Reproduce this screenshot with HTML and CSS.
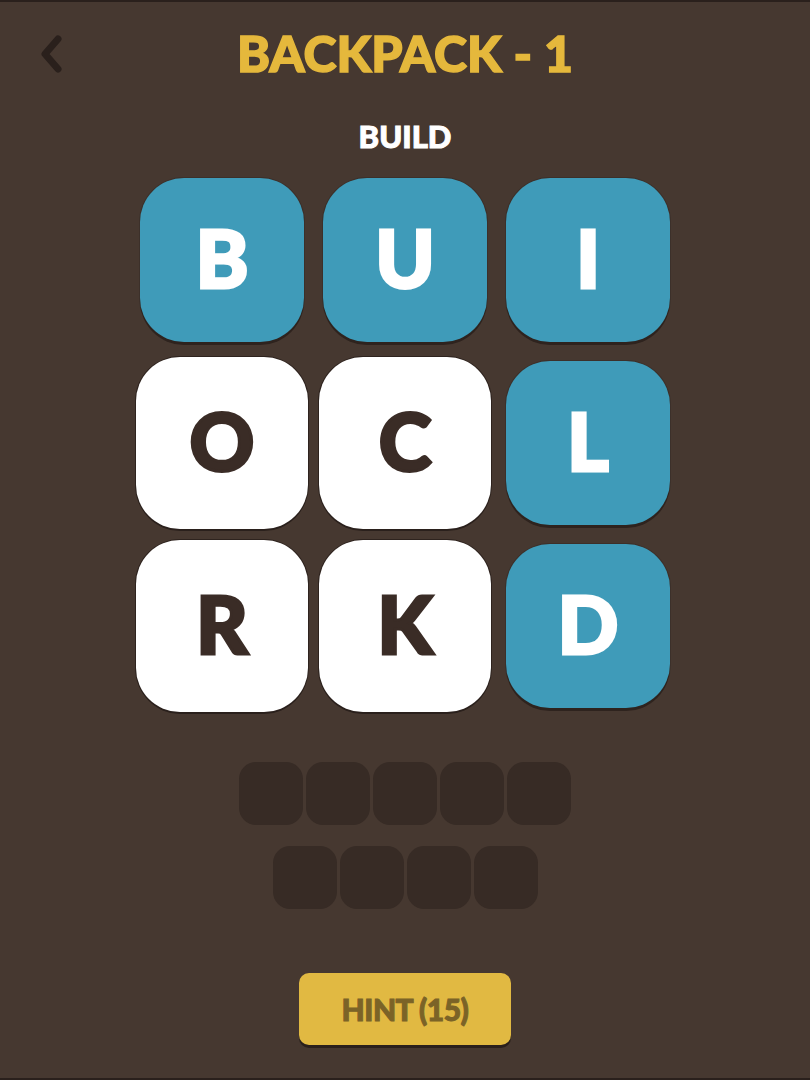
FILE: index.html
```html
<!DOCTYPE html>
<html>
<head>
<meta charset="utf-8">
<link rel="stylesheet" href="styles.css">
</head>
<body>
<div class="screen">
  <header class="header">
    <svg class="back" width="30" height="40" viewBox="0 0 30 40"><path d="M21 5 L8 20 L21 35" fill="none" stroke="#2a201c" stroke-width="7" stroke-linecap="round" stroke-linejoin="round"/></svg>
    <h1 class="title">BACKPACK - 1</h1>
  </header>
  <div class="word">BUILD</div>
  <div class="grid">
    <div class="cell"><div class="tile blue">B</div></div>
    <div class="cell"><div class="tile blue">U</div></div>
    <div class="cell"><div class="tile blue">I</div></div>
    <div class="cell"><div class="tile white">O</div></div>
    <div class="cell"><div class="tile white">C</div></div>
    <div class="cell"><div class="tile blue">L</div></div>
    <div class="cell"><div class="tile white">R</div></div>
    <div class="cell"><div class="tile white">K</div></div>
    <div class="cell"><div class="tile blue">D</div></div>
  </div>
  <div class="slots">
    <div class="slot-row">
      <div class="slot"></div><div class="slot"></div><div class="slot"></div><div class="slot"></div><div class="slot"></div>
    </div>
    <div class="slot-row">
      <div class="slot"></div><div class="slot"></div><div class="slot"></div><div class="slot"></div>
    </div>
  </div>
  <div class="hint-wrap"><button class="hint">HINT (15)</button></div>
</div>
</body>
</html>
```
FILE: styles.css
```css
html, body {
  margin: 0;
  padding: 0;
}
body {
  background: #463830;
  font-family: Lato, "Open Sans", sans-serif;
}
.screen {
  height: 1076px;
  border-top: 2px solid #2a201c;
  border-bottom: 2px solid #2a201c;
  display: flex;
  flex-direction: column;
  align-items: center;
}
.header {
  position: relative;
  width: 100%;
  height: 100px;
  display: flex;
  justify-content: center;
  align-items: flex-start;
}
.back {
  position: absolute;
  left: 37px;
  top: 32px;
}
.title {
  margin: 24px 0 0;
  font-size: 50px;
  font-weight: 900;
  color: #e5b83c;
  line-height: 54px;
  letter-spacing: 0;
  -webkit-text-stroke: 1.5px #e5b83c;
}
.word {
  margin-top: 14px;
  font-size: 31px;
  font-weight: 900;
  color: #ffffff;
  line-height: 40px;
  -webkit-text-stroke: 1px #ffffff;
}
.grid {
  margin-top: 18px;
  display: grid;
  grid-template-columns: repeat(3, 172px);
  grid-template-rows: repeat(3, 172px);
  gap: 11px;
}
.cell {
  display: flex;
}
.tile {
  flex: 1;
  border-radius: 44px;
  display: flex;
  align-items: center;
  justify-content: center;
  font-size: 80px;
  font-weight: 900;
  line-height: 1;
  padding-bottom: 6px;
}
.tile.blue {
  margin: 4px;
  background: #3f9bb9;
  color: #ffffff;
  -webkit-text-stroke: 3px #ffffff;
  box-shadow: 0 3px 0 #2e231e, 0 0 0 1px #3c302a;
}
.tile.white {
  background: #ffffff;
  color: #3a2c26;
  -webkit-text-stroke: 3px #3a2c26;
  box-shadow: 0 2px 0 #2a201c, 0 0 0 1px #2e231e;
}
.slots {
  margin-top: 50px;
  display: flex;
  flex-direction: column;
  align-items: center;
  gap: 21px;
}
.slot-row {
  display: flex;
  gap: 3px;
}
.slot {
  width: 64px;
  height: 63px;
  border-radius: 17px;
  background: #372b25;
}
.hint-wrap {
  margin-top: 64px;
}
.hint {
  width: 212px;
  height: 72px;
  border: none;
  border-radius: 10px;
  background: #e1b942;
  box-shadow: 0 3px 0 #2a201c;
  color: #7b6327;
  font-family: Lato, sans-serif;
  font-weight: 900;
  font-size: 30px;
  -webkit-text-stroke: 1px #7b6327;
  letter-spacing: -0.5px;
  padding: 0;
}
```
